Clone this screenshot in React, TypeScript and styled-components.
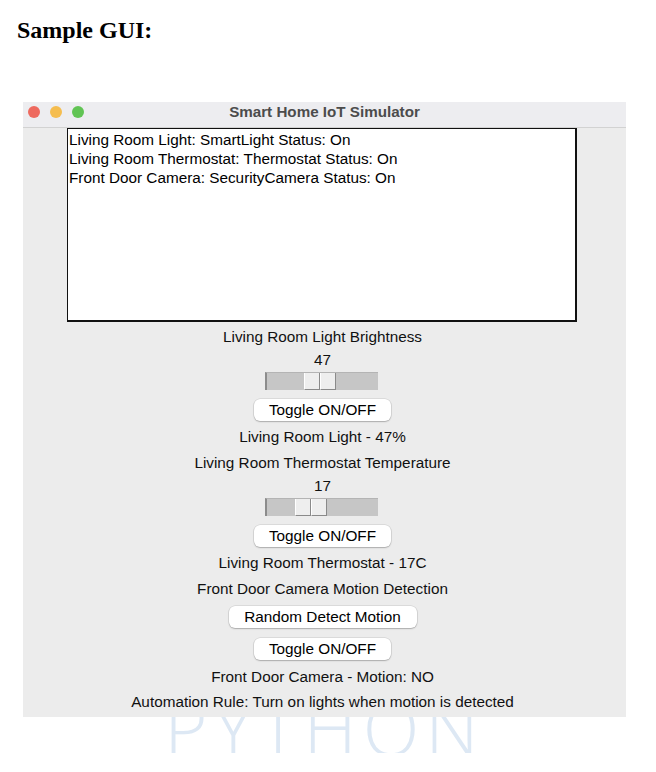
import React from "react";
import styled, { createGlobalStyle } from "styled-components";

const Global = createGlobalStyle`
  html, body { padding: 0; background: #ffffff; }
  body { margin: 8px; font-family: "Liberation Serif", "Times New Roman", serif; }
`;

const Page = styled.div`
  width: 640px;
`;

const Heading = styled.h2`
  margin: 9px 0 0 9px;
  font-family: "Liberation Serif", "Times New Roman", serif;
  font-size: 24px;
  line-height: 27px;
  font-weight: bold;
  color: #000;
`;

const Window = styled.div`
  position: relative;
  z-index: 1;
  margin: 58px 0 0 15px;
  width: 603px;
  background: #ececec;
  font-family: "Liberation Sans", Arial, sans-serif;
  font-size: 15.3px;
  color: #111;
`;

const TitleBar = styled.div`
  height: 19px;
  padding: 0 0 6px 5px;
  border-bottom: 1px solid #d2d2d2;
  background: #ededf0;
  display: grid;
  grid-template-columns: 1fr auto 1fr;
  align-items: center;
`;

const Lights = styled.div`
  display: flex;
  gap: 10px;
`;

const Light = styled.span<{ $c: string }>`
  width: 12px;
  height: 12px;
  border-radius: 50%;
  background: ${(p) => p.$c};
`;

const Title = styled.div`
  font-weight: bold;
  font-size: 15.2px;
  color: #4c4c4c;
  padding-right: 5px;
`;

const Body = styled.div`
  display: flex;
  flex-direction: column;
  align-items: center;
  padding: 0 4px 6px 0;
`;

const LogBox = styled.div`
  align-self: flex-start;
  margin-left: 44px;
  width: 510px;
  height: 194px;
  box-sizing: border-box;
  background: #fff;
  border: 1px solid #111;
  border-right-width: 2px;
  border-bottom-width: 2px;
  padding: 1px 0 0 1px;
  line-height: 19px;
  color: #000;
`;

const Label = styled.div<{ $mt: number }>`
  margin-top: ${(p) => p.$mt}px;
  line-height: 18px;
  white-space: nowrap;
`;

const Track = styled.div<{ $mt: number }>`
  position: relative;
  margin-top: ${(p) => p.$mt}px;
  margin-right: 2px;
  width: 113px;
  height: 18px;
  box-sizing: border-box;
  background: #c6c6c6;
  border-left: 2px solid #8c8c8c;
  border-top: 1px solid #b4b4b4;
`;

const Thumb = styled.div`
  position: absolute;
  top: 0;
  height: 17px;
  width: 32px;
  display: flex;
`;

const ThumbHalf = styled.span`
  flex: 1;
  box-sizing: border-box;
  background: #eeeeee;
  border-left: 1px solid #ffffff;
  border-right: 1px solid #8a8a8a;
  border-bottom: 1px solid #8a8a8a;
`;

const Button = styled.button<{ $mt: number; $w: number }>`
  margin-top: ${(p) => p.$mt}px;
  width: ${(p) => p.$w}px;
  height: 22px;
  padding: 0;
  border: none;
  border-radius: 6px;
  background: #ffffff;
  box-shadow: 0 0 0 0.5px rgba(0, 0, 0, 0.14), 0 1px 1.5px rgba(0, 0, 0, 0.22);
  font-family: "Liberation Sans", Arial, sans-serif;
  font-size: 15.3px;
  color: #000;
`;

const Watermark = styled.div`
  position: relative;
  z-index: 0;
  margin: -20px 0 0 15px;
  width: 603px;
  height: 56px;
  text-align: center;
  font-family: "Open Sans", "Lato", "DejaVu Sans", sans-serif;
  font-weight: 300;
  font-size: 74px;
  line-height: 62px;
  letter-spacing: 6px;
  color: #dde8f4;
`;

function Slider({ mt, frac }: { mt: number; frac: number }) {
  return (
    <Track $mt={mt}>
      <Thumb style={{ left: Math.round(frac * 79) }}>
        <ThumbHalf />
        <ThumbHalf />
      </Thumb>
    </Track>
  );
}

export default function App() {
  return (
    <Page>
      <Global />
      <Heading>Sample GUI:</Heading>
      <Window>
        <TitleBar>
          <Lights>
            <Light $c="#ee6a5f" />
            <Light $c="#f5bd4f" />
            <Light $c="#61c454" />
          </Lights>
          <Title>Smart Home IoT Simulator</Title>
          <span />
        </TitleBar>
        <Body>
          <LogBox>
            <div>Living Room Light: SmartLight Status: On</div>
            <div>Living Room Thermostat: Thermostat Status: On</div>
            <div>Front Door Camera: SecurityCamera Status: On</div>
          </LogBox>
          <Label $mt={6}>Living Room Light Brightness</Label>
          <Label $mt={5}>47</Label>
          <Slider mt={3} frac={0.47} />
          <Button $mt={9} $w={137}>Toggle ON/OFF</Button>
          <Label $mt={7}>Living Room Light - 47%</Label>
          <Label $mt={8}>Living Room Thermostat Temperature</Label>
          <Label $mt={5}>17</Label>
          <Slider mt={3} frac={(17 - 10) / 20} />
          <Button $mt={9} $w={137}>Toggle ON/OFF</Button>
          <Label $mt={7}>Living Room Thermostat - 17C</Label>
          <Label $mt={8}>Front Door Camera Motion Detection</Label>
          <Button $mt={8} $w={188}>Random Detect Motion</Button>
          <Button $mt={10} $w={137}>Toggle ON/OFF</Button>
          <Label $mt={8}>Front Door Camera - Motion: NO</Label>
          <Label $mt={7}>Automation Rule: Turn on lights when motion is detected</Label>
        </Body>
      </Window>
      <Watermark>PYTHON</Watermark>
    </Page>
  );
}
